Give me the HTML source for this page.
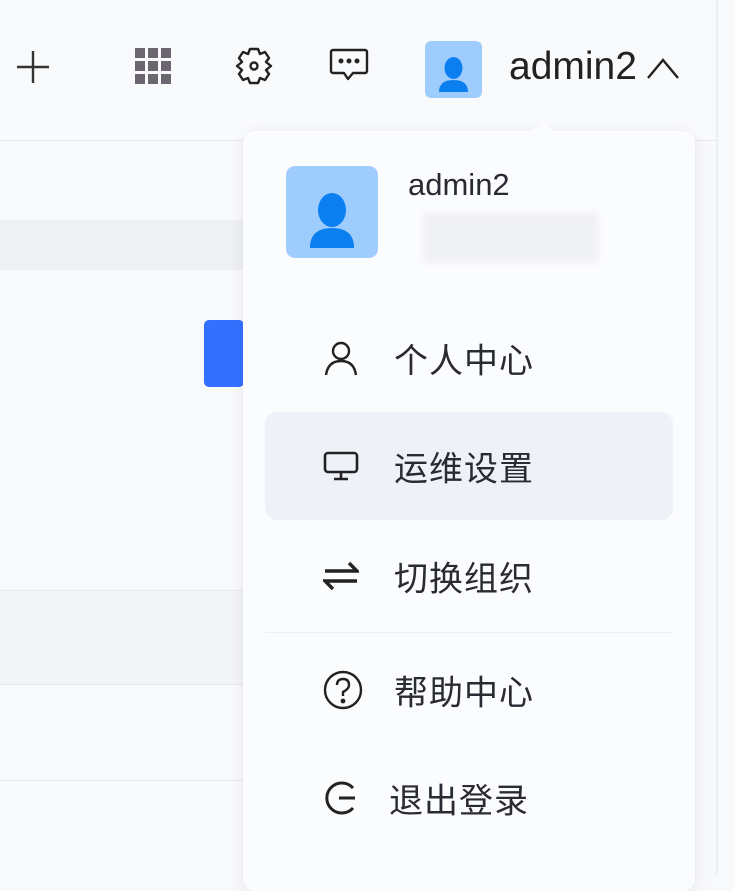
<!DOCTYPE html>
<html><head><meta charset="utf-8"><style>
*{margin:0;padding:0;box-sizing:border-box}
body{width:734px;height:874px;overflow:hidden;background:#f8f9fb;font-family:"Liberation Sans","Noto Sans CJK SC",sans-serif;position:relative;color:#222}
.abs{position:absolute}
.hdr{left:0;top:0;width:718px;height:141px;background:#f9fafc;border-bottom:1px solid #e6e8ee}
.rline{left:716px;top:0;width:2px;height:874px;background:#eceef2}
.menu{left:243px;top:131px;width:452px;height:760px;background:#fbfcfe;border-radius:12px;box-shadow:0 2px 14px rgba(0,0,0,.08)}
.item{position:absolute;left:0;width:452px;height:108px;font-size:34px;color:#2a2a33;letter-spacing:1px}
.item span{position:absolute;left:151px;top:50%;transform:translateY(-50%)}
.item svg{position:absolute;left:80px;top:50%;transform:translateY(-50%)}
</style></head><body>
<div class="abs hdr"></div>
<div class="abs rline"></div>
<div class="abs" style="left:0;top:220px;width:243px;height:50px;background:#eef0f4"></div>
<div class="abs" style="left:204px;top:320px;width:40px;height:67px;background:#3370ff;border-radius:5px"></div>
<div class="abs" style="left:0;top:590px;width:243px;height:95px;background:#f3f4f7;border-top:1px solid #e8eaee;border-bottom:1px solid #e8eaee"></div>
<div class="abs" style="left:0;top:780px;width:243px;height:1px;background:#e8eaee"></div>
<svg class="abs" style="left:14px;top:48px" width="38" height="38"><path d="M19 3V35M3 19H35" stroke="#333" stroke-width="2.4"/></svg>
<svg class="abs" style="left:134px;top:47px" width="40" height="40" fill="#6b6670"><rect x="1" y="1" width="10" height="10"/><rect x="14" y="1" width="10" height="10"/><rect x="27" y="1" width="10" height="10"/><rect x="1" y="14" width="10" height="10"/><rect x="14" y="14" width="10" height="10"/><rect x="27" y="14" width="10" height="10"/><rect x="1" y="27" width="10" height="10"/><rect x="14" y="27" width="10" height="10"/><rect x="27" y="27" width="10" height="10"/></svg>
<svg class="abs" style="left:234px;top:45px" width="40" height="42" fill="none" stroke="#222" stroke-width="2.4" stroke-linejoin="round"><path d="M16 4H24L26 9L31 7L35 13L32 17L37 21L32 25L35 29L31 35L26 33L24 38H16L14 33L9 35L5 29L8 25L3 21L8 17L5 13L9 7L14 9Z"/><circle cx="20" cy="21" r="3.5"/></svg>
<svg class="abs" style="left:329px;top:48px" width="40" height="34" fill="none" stroke="#222" stroke-width="2.4"><path d="M4 2H36a2 2 0 0 1 2 2V23a2 2 0 0 1-2 2H24L19 31L15 25H4a2 2 0 0 1-2-2V4a2 2 0 0 1 2-2Z" stroke-linejoin="round"/><circle cx="12" cy="13" r="1.3" fill="#222"/><circle cx="20" cy="13" r="1.3" fill="#222"/><circle cx="28" cy="13" r="1.3" fill="#222"/></svg>
<div class="abs" style="left:425px;top:41px;width:57px;height:57px;background:#9ecdfd;border-radius:6px;overflow:hidden">
<svg width="57" height="57"><ellipse cx="28.5" cy="27" rx="9" ry="11" fill="#0b7ff0"/><path d="M14 51Q14 39 28.5 39Q43 39 43 51Z" fill="#0b7ff0"/></svg></div>
<div class="abs" style="left:509px;top:45px;font-size:39px;color:#222">admin2</div>
<svg class="abs" style="left:645px;top:55px" width="36" height="26" fill="none" stroke="#222" stroke-width="2.4"><path d="M3 23L18 5L33 23"/></svg>
<div class="abs menu">
<svg class="abs" style="left:287px;top:-10px" width="26" height="12"><path d="M0 12L13 0L26 12Z" fill="#fbfcfe"/></svg>
<div class="abs" style="left:43px;top:35px;width:92px;height:92px;background:#9ecdfd;border-radius:9px">
<svg width="92" height="92"><ellipse cx="46" cy="44" rx="14" ry="17" fill="#0b7ff0"/><path d="M24 82Q24 62 46 62Q68 62 68 82Z" fill="#0b7ff0"/></svg></div>
<div class="abs" style="left:165px;top:36px;font-size:31px;color:#2a2a33">admin2</div>
<div class="abs" style="left:180px;top:82px;width:175px;height:50px;background:#f0f1f3;filter:blur(3px)"></div>
<div class="item" style="top:173px"><svg width="36" height="36" fill="none" stroke="#222" stroke-width="2.4"><circle cx="18" cy="11" r="8"/><path d="M3 35Q5 21 18 21Q31 21 33 35"/></svg><span>个人中心</span></div>
<div class="abs" style="left:22px;top:281px;width:408px;height:108px;background:#eef1f7;border-radius:12px"></div>
<div class="item" style="top:281px"><svg width="36" height="32" fill="none" stroke="#222" stroke-width="2.6"><rect x="2" y="3" width="32" height="19" rx="3"/><path d="M18 22V28M11 29H25"/></svg><span>运维设置</span></div>
<div class="item" style="top:391px"><svg width="36" height="34" fill="none" stroke="#222" stroke-width="3.4"><path d="M2 12H34L26 4M34 22H2L10 30"/></svg><span>切换组织</span></div>
<div class="abs" style="left:22px;top:501px;width:408px;height:1px;background:#eceef2"></div>
<div class="item" style="top:505px"><svg width="40" height="40" fill="none" stroke="#222" stroke-width="2.4"><circle cx="20" cy="20" r="18"/><path d="M14 15Q14 9 20 9Q26 9 26 15Q26 19 20 22V26"/><circle cx="20" cy="31" r="1.2" fill="#222"/></svg><span>帮助中心</span></div>
<div class="item" style="top:613px"><svg width="34" height="36" fill="none" stroke="#222" stroke-width="3"><path d="M30 8A15 15 0 1 0 30 28"/><path d="M16 18H32"/></svg><span style="left:146px">退出登录</span></div>
</div>
</body></html>
